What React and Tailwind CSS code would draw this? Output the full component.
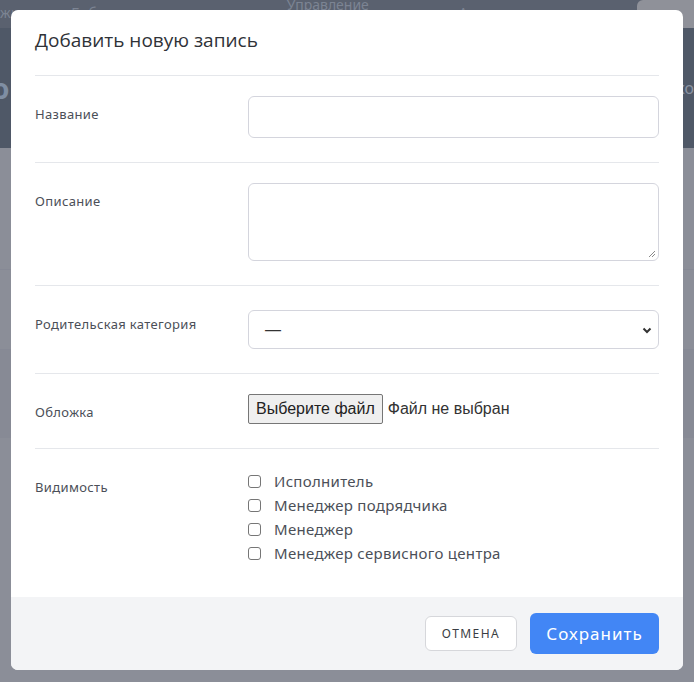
import React from "react";

function Row({ label, children, last }) {
  return (
    <div className={"flex pt-5 " + (last ? "pb-8" : "pb-6 border-b border-[#e5e7eb]")}>
      <div className="w-[213px] shrink-0 mt-2 text-[13px] tracking-[0.35px] leading-5 text-[#4b4f58]">{label}</div>
      <div className="flex-1">{children}</div>
    </div>
  );
}

function Check({ text }) {
  return (
    <label className="flex items-center h-6">
      <span className="w-[13px] h-[13px] rounded-[3px] border border-[#767676] bg-white mr-[13px]" />
      <span className="text-[15px] tracking-[0.3px] text-[#4b4f58]">{text}</span>
    </label>
  );
}

export default function App() {
  return (
    <div className="relative w-[694px] h-[682px] overflow-hidden bg-[#8b8e98] font-['Noto_Sans',sans-serif]">
      {/* dimmed background page */}
      <div className="h-[28px] bg-[#5a616f] flex items-center text-[14px] text-[#7c8493]">
        <span className="ml-0 -mt-1">жи</span>
        <span className="ml-[52px] -mt-1">Библиотека ⌄</span>
        <span className="ml-[120px] -mt-5">Управление</span>
        <span className="ml-[90px] -mt-1">Администрирование ⌄</span>
        <span className="ml-auto h-full w-[57px] bg-[#8f9199] rounded-l-md text-[#6d707a] pl-1 pt-1">По</span>
      </div>
      <div className="h-[120px] bg-[#4f5867] flex items-center justify-between text-[#7f8ea3]">
        <span className="text-[28px] font-bold -ml-2">о</span>
        <span className="text-[16px] text-[#8a93a2]">ко</span>
      </div>
      <div className="h-[122px] border-b border-[#868995]" />
      <div className="h-[80px] border-b border-[#868995]" />
      <div className="h-[88px] bg-[#878a95]" />

      {/* modal */}
      <div className="absolute left-[11px] top-[10px] w-[672px] h-[660px] bg-white rounded-[7px] overflow-hidden flex flex-col">
        <div className="px-6">
          <div className="pt-4 pb-[21px] border-b border-[#e5e7eb]">
            <h2 className="text-[19px] leading-7 text-[#2f3237] font-['Open_Sans',sans-serif]">Добавить новую запись</h2>
          </div>
          <Row label="Название">
            <div className="h-[42px] rounded-md border border-[#d4d5dd] bg-white" />
          </Row>
          <Row label="Описание">
            <div className="relative h-[78px] rounded-md border border-[#d4d5dd] bg-white">
              <svg className="absolute right-[2px] bottom-[2px]" width="8" height="8" viewBox="0 0 8 8">
                <path d="M7 1L1 7M7 4L4 7" stroke="#8a8a8a" strokeWidth="1" />
              </svg>
            </div>
          </Row>
          <Row label="Родительская категория">
            <div className="mt-1 h-[39px] rounded-md border border-[#d4d5dd] bg-white flex items-center justify-between pl-4 pr-[6px]">
              <span className="text-[16px] text-[#333] font-['Liberation_Sans',sans-serif]">—</span>
              <svg width="10" height="8" viewBox="0 0 10 8">
                <path d="M1.5 2.5L5 6L8.5 2.5" stroke="#333" strokeWidth="2" fill="none" />
              </svg>
            </div>
          </Row>
          <Row label="Обложка">
            <div className="flex items-center h-[30px] font-['Liberation_Sans',sans-serif] text-[16px] text-[#222]">
              <span className="h-[30px] px-[7px] flex items-center border border-[#767676] rounded-[2px] bg-[#efefef]">Выберите файл</span>
              <span className="ml-[5px] text-[#333]">Файл не выбран</span>
            </div>
          </Row>
          <Row label="Видимость" last>
            <div className="flex flex-col">
              <Check text="Исполнитель" />
              <Check text="Менеджер подрядчика" />
              <Check text="Менеджер" />
              <Check text="Менеджер сервисного центра" />
            </div>
          </Row>
        </div>
        <div className="flex-1 bg-[#f3f4f6] flex items-center justify-end gap-[13px] px-6">
          <button className="h-[35px] w-[92px] bg-white border border-[#d6d7db] rounded-md text-[12px] tracking-[0.12em] text-[#3a3d44]">ОТМЕНА</button>
          <button className="h-[41px] w-[129px] bg-[#4286f5] rounded-md text-[17px] tracking-[0.06em] text-white">Сохранить</button>
        </div>
      </div>
    </div>
  );
}
